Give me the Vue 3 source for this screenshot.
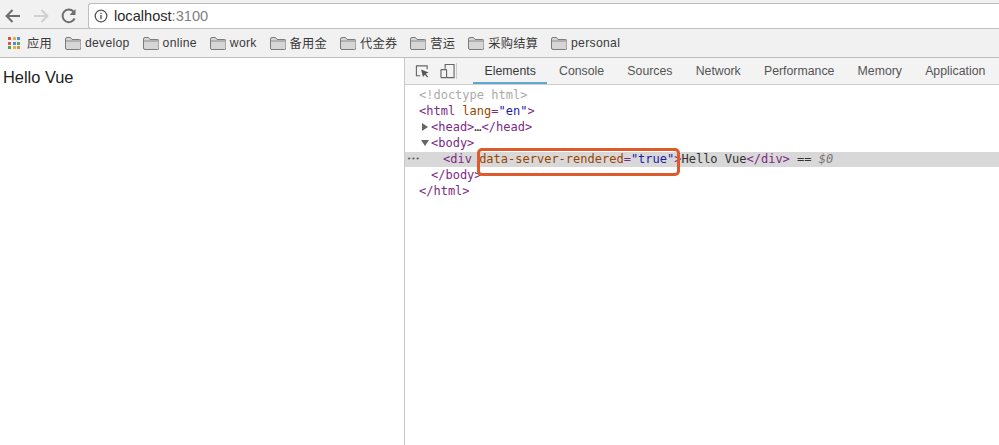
<script setup>
const bookmarks = [
  { label: '应用', apps: true },
  { label: 'develop' },
  { label: 'online' },
  { label: 'work' },
  { label: '备用金' },
  { label: '代金券' },
  { label: '营运' },
  { label: '采购结算' },
  { label: 'personal' }
]
const tabs = ['Elements', 'Console', 'Sources', 'Network', 'Performance', 'Memory', 'Application']
const dots = ['#d9513c', '#e8b13a', '#4a8de0', '#e0574a', '#4a8de0', '#5aa85a', '#4fa35a', '#e8b13a', '#d9913c']
</script>

<template>
  <div class="page">
    <div class="toolbar">
      <svg class="nav" width="18" height="18" viewBox="0 0 18 18"><path d="M16 9H3M8.500 3 2.600 9l5.900 6" fill="none" stroke="#6d6d6d" stroke-width="2"/></svg>
      <svg class="nav" width="18" height="18" viewBox="0 0 18 18"><path d="M2 9h13M9.500 3l5.900 6-5.900 6" fill="none" stroke="#cfcfcf" stroke-width="2"/></svg>
      <svg class="nav" width="18" height="18" viewBox="0 0 18 18"><path d="M14.600 11.500A6.300 6.300 0 1 1 13.400 4.500" fill="none" stroke="#6d6d6d" stroke-width="2"/><path d="M15.500 2v6h-6z" fill="#6d6d6d"/></svg>
      <div class="address">
        <svg width="14" height="14" viewBox="0 0 14 14"><circle cx="7" cy="7" r="5.800" fill="none" stroke="#555" stroke-width="1.300"/><path d="M7 6v4.200M7 3.700v1.300" stroke="#555" stroke-width="1.400"/></svg>
        <span class="host">localhost<span class="port">:3100</span></span>
      </div>
    </div>
    <div class="bookmarks">
      <div v-for="b in bookmarks" :key="b.label" class="bookmark">
        <div v-if="b.apps" class="apps"><i v-for="(c, i) in dots" :key="i" :style="{ background: c }"></i></div>
        <svg v-else width="16" height="13" viewBox="0 0 16 13"><path d="M.5 11V2q0-1.500 1.500-1.500h3.500l1.500 2h7.500q1.500 0 1.500 1.500v7q0 1.500-1.500 1.500H2q-1.500 0-1.500-1.500z" fill="#d6d6d6" stroke="#7b7b7b"/><path d="M1 4h14" stroke="#8c8c8c"/></svg>
        <span>{{ b.label }}</span>
      </div>
    </div>
    <div class="main">
      <div class="viewport">Hello Vue</div>
      <div class="devtools">
        <div class="tabbar">
          <div class="tools">
            <svg width="16" height="16" viewBox="0 0 16 16"><path d="M5.500 13H1.500V2.500H13V6" fill="none" stroke="#666" stroke-width="1.200"/><path d="M6.500 6.500 14.500 9.500 11.500 11 14 14l-1 1-2.500-3-2 2.500z" fill="#555"/></svg>
            <svg width="16" height="16" viewBox="0 0 16 16"><path d="M5.500 5.500V1H15v14H7" fill="none" stroke="#666" stroke-width="1.200"/><rect x="1" y="6.500" width="6" height="8.500" rx=".5" fill="none" stroke="#666" stroke-width="1.200"/></svg>
          </div>
          <div class="sep"></div>
          <div class="tabs">
            <div v-for="(t, i) in tabs" :key="t" class="tab" :class="{ active: i === 0 }">{{ t }}</div>
          </div>
        </div>
        <div class="tree">
          <div class="line l1 gray">&lt;!doctype html&gt;</div>
          <div class="line l1"><span class="pu">&lt;html</span> <span class="attr">lang</span><span class="pu">=</span><span class="val">"en"</span><span class="pu">&gt;</span></div>
          <div class="line l2"><i class="tri right"></i><span class="pu">&lt;head&gt;</span>…<span class="pu">&lt;/head&gt;</span></div>
          <div class="line l2"><i class="tri down"></i><span class="pu">&lt;body&gt;</span></div>
          <div class="line l3 selected">
            <span class="more">•••</span>
            <span class="pu">&lt;div</span> <span class="attr">data-server-rendered</span><span class="pu">=</span><span class="val">"true"</span><span class="pu">&gt;</span>Hello Vue<span class="pu">&lt;/div&gt;</span> == <em>$0</em>
          </div>
          <div class="line l4"><span class="pu">&lt;/body&gt;</span></div>
          <div class="line l1"><span class="pu">&lt;/html&gt;</span></div>
          <div class="mark"></div>
        </div>
      </div>
    </div>
  </div>
</template>

<style>
html, body { margin: 0; background: #fff; }
</style>

<style scoped>
.page { width: 999px; height: 445px; overflow: hidden; display: flex; flex-direction: column; font-family: "Liberation Sans", "Noto Sans CJK SC", sans-serif; color: #303030; }
.toolbar { height: 31px; box-sizing: border-box; padding: 3px 0 0 4px; display: flex; align-items: flex-start; background: #f1f1f1; }
.nav { margin-top: 4px; margin-right: 10px; flex: none; }
.address { flex: 1; height: 26px; box-sizing: border-box; background: #fff; border: 1px solid #bdbdbd; border-right: 0; border-radius: 3px 0 0 3px; display: flex; align-items: center; gap: 6px; padding-left: 5px; }
.host { font-size: 14.600px; color: #2a2a2a; }
.port { color: #808080; }
.bookmarks { height: 30px; box-sizing: border-box; background: #f1f1f1; border-top: 1px solid #c0c0c0; border-bottom: 1px solid #bdbdbd; margin-top: -3px; padding: 0 0 0 8px; display: flex; align-items: center; gap: 12.900px; font-size: 12.200px; }
.bookmark { display: flex; align-items: center; gap: 4px; color: #3a3a3a; letter-spacing: .3px; }
.apps { display: grid; grid-template-columns: repeat(3, 3px); gap: 1.500px; margin-right: 3px; }
.apps i { width: 3px; height: 3px; display: block; }
.main { flex: 1; display: flex; min-height: 0; }
.viewport { width: 404px; box-sizing: border-box; padding: 10px 3px; font-size: 16.400px; color: #222; }
.devtools { flex: 1; border-left: 1px solid #c9c9c9; min-width: 0; display: flex; flex-direction: column; }
.tabbar { height: 27px; box-sizing: border-box; background: #f3f3f3; border-bottom: 1px solid #cdcdcd; display: flex; align-items: stretch; }
.tools { display: flex; align-items: center; gap: 10px; padding-left: 10px; width: 50px; box-sizing: border-box; }
.sep { width: 1px; height: 16px; background: #ccc; align-self: center; margin-right: 16px; margin-left: 1px; }
.tabs { display: flex; }
.tab { padding: 0 11.600px; font-size: 12.300px; line-height: 27px; color: #555; white-space: nowrap; }
.tab.active { color: #3a3a3a; box-shadow: inset 0 -2px 0 #5fa8d3; height: 26px; }
.tree { position: relative; padding-top: 2px; font-family: "DejaVu Sans Mono", monospace; font-size: 12px; line-height: 16px; color: #333; }
.line { height: 16px; white-space: pre; position: relative; }
.l1 { padding-left: 14px; }
.l2 { padding-left: 26px; }
.l3 { padding-left: 38px; }
.l4 { padding-left: 26px; }
.gray { color: #ababab; }
.pu { color: #7d2a85; }
.attr { color: #994500; }
.val { color: #1a1aa6; }
.selected { background: #d8d8d8; box-shadow: inset 0 1px 0 #fff; }
.selected em { color: #777; }
.more { position: absolute; left: 2px; top: 0; font-size: 7px; color: #555; letter-spacing: 0; }
.tri { position: absolute; width: 0; height: 0; border-style: solid; }
.tri.right { left: 17px; top: 4px; border-width: 4px 0 4px 6px; border-color: transparent transparent transparent #666; }
.tri.down { left: 16px; top: 5px; border-width: 6px 4px 0 4px; border-color: #666 transparent transparent transparent; }
.mark { position: absolute; left: 72px; top: 63px; width: 203px; height: 28px; box-sizing: border-box; border: 3px solid #df5a2b; border-radius: 5px; }
</style>
